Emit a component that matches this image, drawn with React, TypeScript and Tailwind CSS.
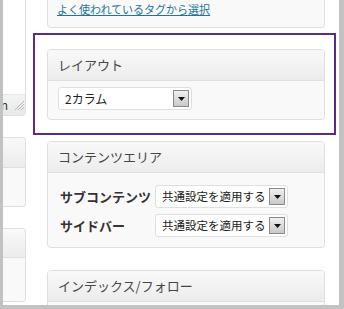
import React from 'react';

const font = { fontFamily: '"Noto Sans CJK JP", "Liberation Sans", sans-serif' };

function Arrow() {
  return (
    <span className="flex h-[17px] w-[16px] shrink-0 items-center justify-center border border-[#8a8a8a] bg-gradient-to-b from-[#f0f0f0] to-[#c9c9c9]">
      <svg width="7" height="4" viewBox="0 0 7 4"><path d="M0 0h7L3.5 4z" fill="#111" /></svg>
    </span>
  );
}

function Select({ label, className }: { label: string; className: string }) {
  return (
    <div className={`flex h-[23px] shrink-0 items-center justify-between rounded-[3px] border border-[#dfdfdf] bg-white pl-[6px] pr-[2px] text-[#222] ${className}`}>
      <span className="whitespace-nowrap leading-none">{label}</span>
      <Arrow />
    </div>
  );
}

function Header({ title }: { title: string }) {
  return (
    <div className="flex h-[31px] shrink-0 items-center border-b border-[#dfdfdf] bg-gradient-to-b from-[#f9f9f9] to-[#ececec] pl-[10px] text-[13px] text-[#464646]">
      {title}
    </div>
  );
}

export default function App() {
  return (
    <div className="h-[309px] w-[344px] overflow-hidden bg-[#c2c2c2] pl-[3px] pr-[5px] pb-[4px]" style={font}>
      <div className="flex h-full w-full overflow-hidden bg-white">
        {/* left column, mostly cut off */}
        <div className="flex w-[23px] shrink-0 flex-col items-end overflow-hidden">
          <div className="flex h-[116px] w-[120px] shrink-0 flex-col rounded-br-[4px] border-r border-b border-[#dfdfdf] bg-white">
            <div className="flex-1" />
            <div className="flex h-[21px] items-center justify-end gap-[6px] border-t border-[#e6e6e6] bg-gradient-to-b from-[#f4f4f4] to-[#e8e8e8] pr-[1px] text-[12px] text-[#333]">
              <span className="leading-none">n</span>
              <svg width="10" height="10" viewBox="0 0 10 10">
                <path d="M10 1L1 10M10 4L4 10M10 7L7 10" stroke="#b5b5b5" strokeWidth="1" />
              </svg>
            </div>
          </div>
          <div className="mt-[21px] flex h-[70px] w-[120px] shrink-0 flex-col overflow-hidden rounded-r-[4px] border-y border-r border-[#dfdfdf] bg-[#f9f9f9]">
            <div className="h-[30px] shrink-0 border-b border-[#dfdfdf] bg-gradient-to-b from-[#f9f9f9] to-[#ececec]" />
          </div>
          <div className="mt-[21px] flex h-[74px] w-[120px] shrink-0 flex-col overflow-hidden rounded-r-[4px] border-y border-r border-[#dfdfdf] bg-[#f9f9f9]">
            <div className="h-[29px] shrink-0 border-b border-[#dfdfdf] bg-gradient-to-b from-[#f9f9f9] to-[#ececec]" />
          </div>
        </div>

        {/* main column */}
        <div className="ml-[7px] flex w-[303px] shrink-0 flex-col">
          <div className="-mt-[6px] ml-[14px] flex h-[34px] w-[278px] shrink-0 items-start rounded-b-[4px] border border-[#dfdfdf] bg-[#f9f9f9] pl-[9px] pt-[7px]">
            <a className="text-[11px] leading-[14px] text-[#21759b] underline">よく使われているタグから選択</a>
          </div>

          <div className="mt-[5px] h-[102px] shrink-0 border-2 border-[#5a2a8a] pl-[12px] pr-[9px] pt-[14px]">
            <div className="h-[71px] overflow-hidden rounded-[4px] border border-[#dfdfdf] bg-[#f9f9f9]">
              <Header title="レイアウト" />
              <div className="pl-[10px] pt-[6px]">
                <Select label="2カラム" className="w-[134px] text-[12px]" />
              </div>
            </div>
          </div>

          <div className="ml-[14px] mt-[6px] h-[107px] w-[278px] shrink-0 overflow-hidden rounded-[4px] border border-[#dfdfdf] bg-[#f9f9f9]">
            <Header title="コンテンツエリア" />
            <div className="flex flex-col gap-[6px] pt-[12px]">
              <div className="flex items-center">
                <span className="w-[107px] shrink-0 whitespace-nowrap pl-[12px] text-[13px] font-bold leading-none text-[#333]">サブコンテンツ</span>
                <Select label="共通設定を適用する" className="w-[133px] text-[11.5px]" />
              </div>
              <div className="flex items-center">
                <span className="w-[107px] shrink-0 whitespace-nowrap pl-[12px] text-[13px] font-bold leading-none text-[#333]">サイドバー</span>
                <Select label="共通設定を適用する" className="w-[133px] text-[11.5px]" />
              </div>
            </div>
          </div>

          <div className="ml-[14px] mt-[22px] h-[60px] w-[278px] shrink-0 overflow-hidden rounded-t-[4px] border border-[#dfdfdf] bg-[#f9f9f9]">
            <Header title="インデックス/フォロー" />
          </div>
        </div>
      </div>
    </div>
  );
}
